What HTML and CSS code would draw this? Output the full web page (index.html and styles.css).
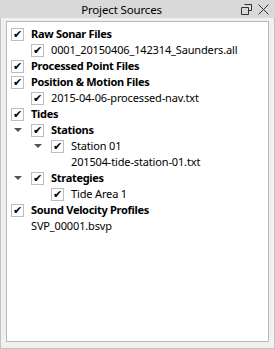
FILE: index.html
```html
<!DOCTYPE html>
<html lang="en">
<head>
    <meta charset="UTF-8">
    <title>Project Sources</title>
    <link rel="stylesheet" href="styles.css">
</head>
<body>

<div class="dock">
    <div class="dock-title">
        <span class="title-text">Project Sources</span>
        <div class="title-buttons">
            <svg width="11" height="11" viewBox="0 0 11 11"><path d="M3.5 0.5h7v6h-3M0.5 3.5h7v7h-7z" fill="none" stroke="#333" stroke-width="1"/></svg>
            <svg width="11" height="11" viewBox="0 0 11 11"><path d="M0.5 0.5l10 10M10.5 0.5l-10 10" stroke="#333" stroke-width="1"/></svg>
        </div>
    </div>

    <div class="tree">
        <div class="row lvl0"><span class="chk">&#10004;</span><b>Raw Sonar Files</b></div>
        <div class="row lvl1"><span class="chk">&#10004;</span>0001_20150406_142314_Saunders.all</div>
        <div class="row lvl0"><span class="chk">&#10004;</span><b>Processed Point Files</b></div>
        <div class="row lvl0"><span class="chk">&#10004;</span><b>Position &amp; Motion Files</b></div>
        <div class="row lvl1"><span class="chk">&#10004;</span>2015-04-06-processed-nav.txt</div>
        <div class="row lvl0"><span class="chk">&#10004;</span><b>Tides</b></div>
        <div class="row lvl1"><span class="arrow"></span><span class="chk">&#10004;</span><b>Stations</b></div>
        <div class="row lvl2"><span class="arrow"></span><span class="chk">&#10004;</span>Station 01</div>
        <div class="row lvl3">201504-tide-station-01.txt</div>
        <div class="row lvl1"><span class="arrow"></span><span class="chk">&#10004;</span><b>Strategies</b></div>
        <div class="row lvl2"><span class="chk">&#10004;</span>Tide Area 1</div>
        <div class="row lvl0"><span class="chk">&#10004;</span><b>Sound Velocity Profiles</b></div>
        <div class="row lvl1">SVP_00001.bsvp</div>
    </div>
</div>

</body>
</html>
```

FILE: styles.css
```css
body {
    margin: 0;
    font-family: 'Noto Sans', sans-serif;
    font-size: 11px;
    letter-spacing: -0.15px;
    color: #000;
    background-color: #f0f0f0;
}

.dock {
    width: 275px;
    height: 349px;
    box-sizing: border-box;
    border: 1px solid #c4c4c4;
    border-top: none;
    background-color: #f0f0f0;
    display: flex;
    flex-direction: column;
}

.dock-title {
    height: 18px;
    margin: 0 -1px;
    background-color: #d9d9d9;
    display: flex;
    align-items: center;
    font-size: 11.5px;
}

.title-text {
    flex: 1;
    text-align: center;
    padding-left: 2px;
    line-height: 19px;
}

.title-buttons {
    display: flex;
    gap: 6px;
    padding-right: 6px;
}

.title-buttons svg {
    display: block;
}

.tree {
    flex: 1;
    margin: 3px 5px 6px 5px;
    background-color: #fff;
    border: 1px solid #b9b9b9;
    padding-top: 4px;
}

.row {
    height: 16px;
    line-height: 16px;
    display: flex;
    align-items: center;
    white-space: nowrap;
}

.lvl0 { padding-left: 4px; }
.lvl1 { padding-left: 24px; }
.lvl2 { padding-left: 44px; }
.lvl3 { padding-left: 64px; }

.lvl1 .arrow, .lvl2 .arrow {
    margin-left: -20px;
}

.arrow {
    width: 20px;
    height: 16px;
    position: relative;
}

.arrow::after {
    content: "";
    position: absolute;
    left: 3px;
    top: 6px;
    border-left: 4px solid transparent;
    border-right: 4px solid transparent;
    border-top: 4px solid #555;
}

.chk {
    width: 11px;
    height: 11px;
    border: 1px solid #bdbdbd;
    background: #fff;
    margin-right: 7px;
    font-size: 11px;
    line-height: 11px;
    text-align: center;
    color: #000;
    letter-spacing: 0;
    font-family: 'DejaVu Sans', sans-serif;
}

b {
    font-weight: bold;
    letter-spacing: -0.3px;
}
```
